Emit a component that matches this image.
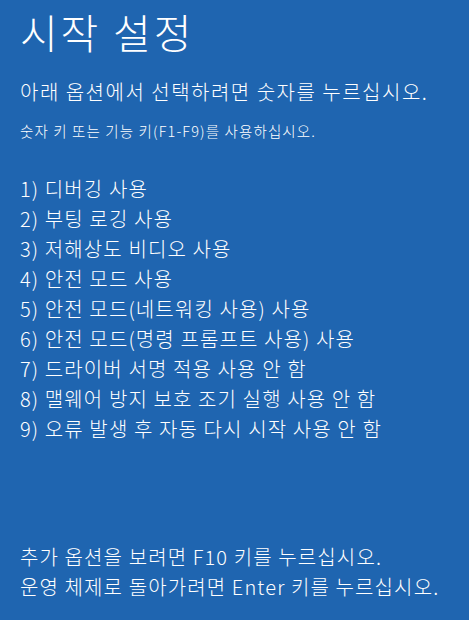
import React from 'react';

const options = [
  '1) 디버깅 사용',
  '2) 부팅 로깅 사용',
  '3) 저해상도 비디오 사용',
  '4) 안전 모드 사용',
  '5) 안전 모드(네트워킹 사용) 사용',
  '6) 안전 모드(명령 프롬프트 사용) 사용',
  '7) 드라이버 서명 적용 사용 안 함',
  '8) 맬웨어 방지 보호 조기 실행 사용 안 함',
  '9) 오류 발생 후 자동 다시 시작 사용 안 함',
];

const App = () => {
  return (
    <div
      className="w-[469px] h-[620px] bg-[#1f65b0] text-white px-[20px] overflow-hidden font-light tracking-[0.07em]"
      style={{ fontFamily: '"Noto Sans CJK KR", "Noto Sans", sans-serif' }}
    >
      <h1 className="pt-[5px] text-[41px] leading-[52px] font-light tracking-[0.07em]">시작 설정</h1>

      <p className="mt-[20px] text-[20px] leading-[30px] tracking-[0.075em]">
        아래 옵션에서 선택하려면 숫자를 누르십시오.
      </p>
      <p className="mt-[12px] text-[14.5px] leading-[24px]">
        숫자 키 또는 기능 키(F1-F9)를 사용하십시오.
      </p>

      {/* Startup options */}
      <ul className="mt-[31px]">
        {options.map((option, index) => (
          <li key={index} className="text-[20px] leading-[30px]">
            {option}
          </li>
        ))}
      </ul>

      <div className="mt-[98px] text-[20px] leading-[30px]">
        <p>추가 옵션을 보려면 F10 키를 누르십시오.</p>
        <p>운영 체제로 돌아가려면 Enter 키를 누르십시오.</p>
      </div>
    </div>
  );
};

export default App;
